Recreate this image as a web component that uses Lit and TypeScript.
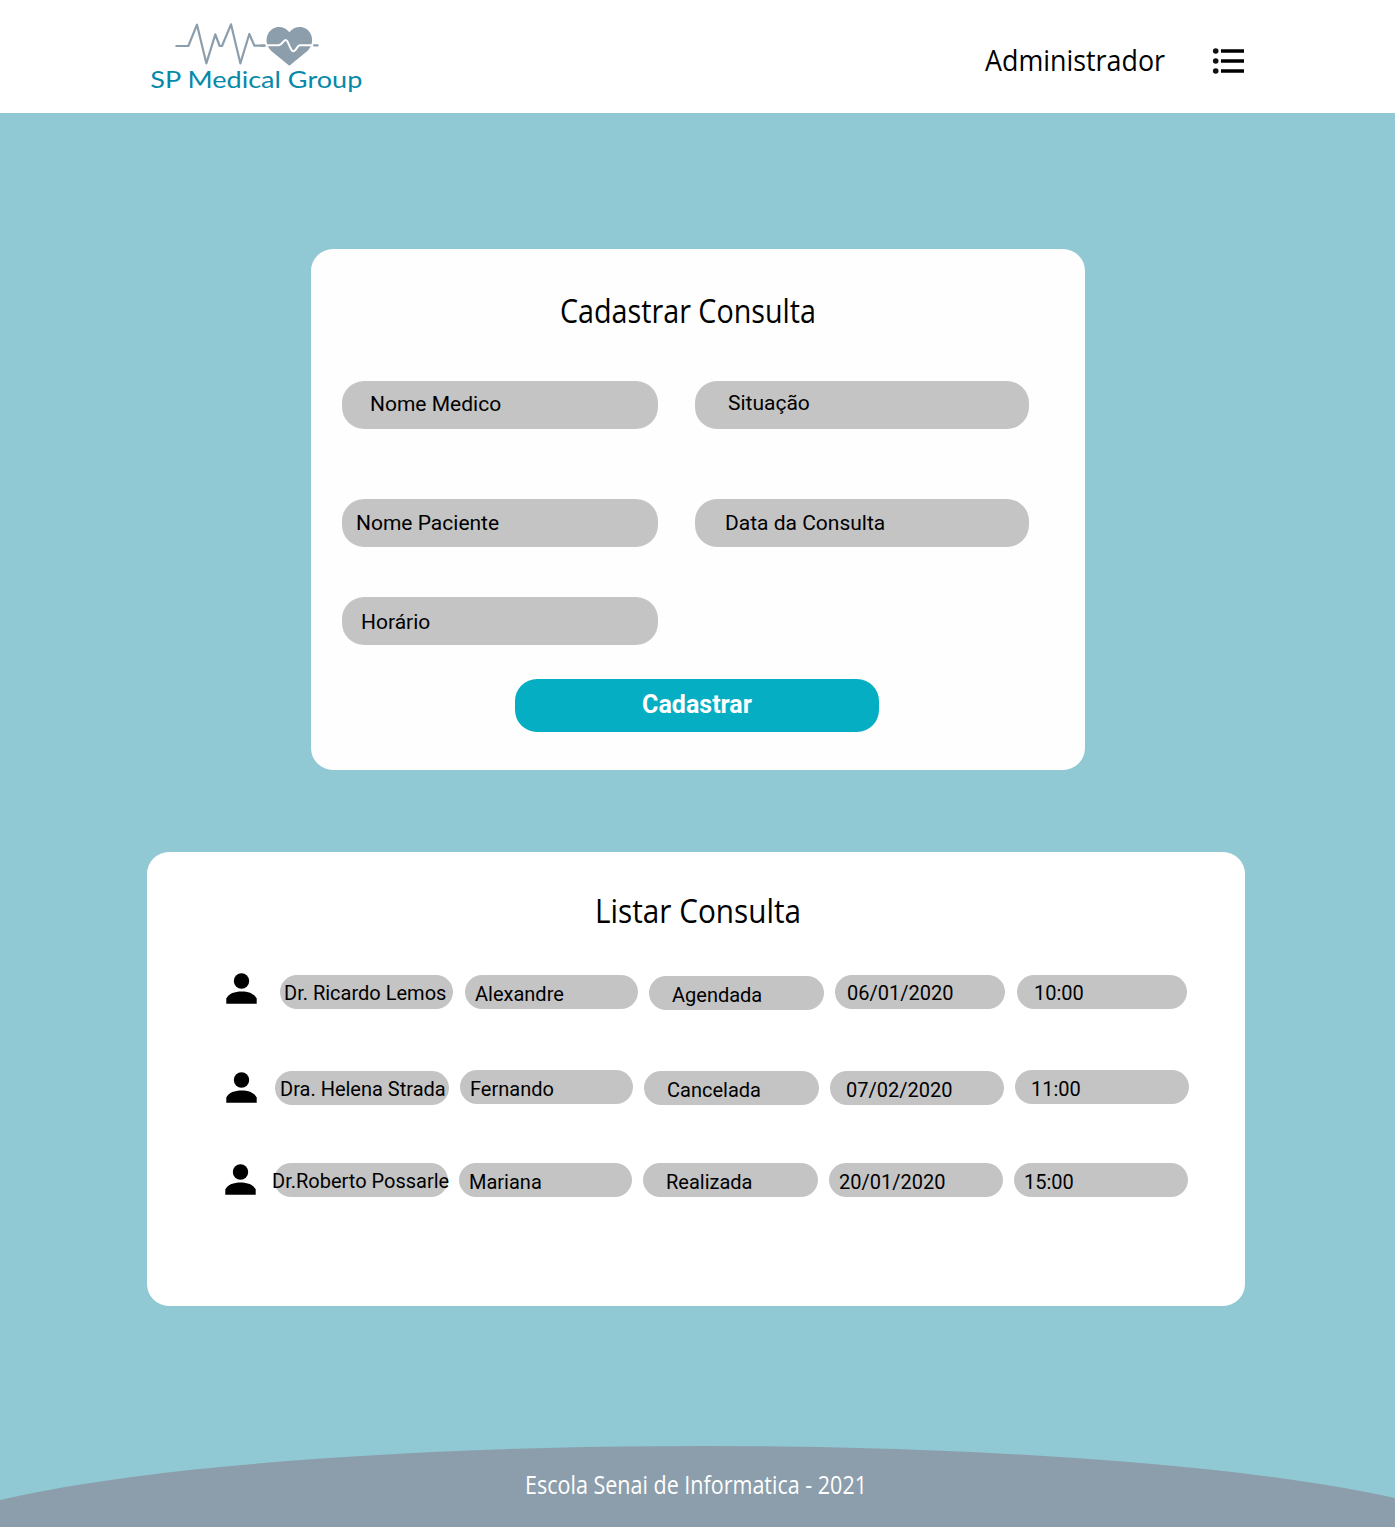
import { LitElement, html, css, svg } from "lit";
import { customElement, property } from "lit/decorators.js";

interface Appointment {
  doctor: string;
  patient: string;
  status: string;
  date: string;
  time: string;
}

const APPOINTMENTS: Appointment[] = [
  { doctor: "Dr. Ricardo Lemos", patient: "Alexandre", status: "Agendada", date: "06/01/2020", time: "10:00" },
  { doctor: "Dra. Helena Strada", patient: "Fernando", status: "Cancelada", date: "07/02/2020", time: "11:00" },
  { doctor: "Dr.Roberto Possarle", patient: "Mariana", status: "Realizada", date: "20/01/2020", time: "15:00" },
];

/** A single line of display text fitted to a fixed width. */
@customElement("fitted-text")
export class FittedText extends LitElement {
  @property() text = "";
  @property({ type: Number }) width = 100;
  @property({ type: Number }) size = 32;

  static styles = css`
    :host { display: block; }
    .line { display: block; overflow: visible; font-family: "Open Sans", "Noto Sans", sans-serif; fill: currentColor; }
  `;

  render() {
    const h = this.size;
    return html`<svg class="line" width=${this.width} height=${h}>
      ${svg`<text x="0" y=${h} font-size=${h} textLength=${this.width} lengthAdjust="spacingAndGlyphs">${this.text}</text>`}
    </svg>`;
  }
}

@customElement("app-logo")
export class AppLogo extends LitElement {
  static styles = css`
    :host { display: block; }
    .logo { display: block; width: 240px; height: 93px; }
    .pulse { fill: none; stroke: #8c9eac; stroke-width: 6.6; stroke-linejoin: round; stroke-linecap: round; }
    .heart { fill: #8c9eac; }
    .cut { fill: none; stroke: #fff; stroke-width: 6; stroke-linejoin: round; stroke-linecap: round; }
    .name { fill: #0689a8; font-family: Lato, sans-serif; font-size: 70px; }
  `;

  render() {
    return html`<svg class="logo" viewBox="0 0 720 279" aria-label="SP Medical Group">
      <path class="pulse" d="M109 108H145L171 44L199 160L226 73L239 108H246L273 43L301 160L328 72L343 107H374" />
      <path class="heart" d="M448 167L393 122C379 107 376 88 384 72C397 46 431 44 448 67C465 44 500 46 512 72C520 88 517 107 503 122Z" />
      <path class="cut" d="M378 106H417C426 105 430 90 437 90C447 91 449 124 461 124C470 123 470 107 479 106H519" />
      <path class="pulse" d="M364 107H374M522 106H533" />
      <text class="name" x="31" y="235" textLength="636" lengthAdjust="spacingAndGlyphs">SP Medical Group</text>
    </svg>`;
  }
}

@customElement("app-root")
export class AppRoot extends LitElement {
  static styles = css`
    :host { display: block; font-family: Roboto, sans-serif; color: #000; }
    * { box-sizing: border-box; }
    .page { display: flex; flex-direction: column; align-items: center; width: 1395px; height: 1527px; background: #90c8d3; overflow: hidden; }

    .header { display: flex; align-items: flex-start; width: 100%; height: 113px; flex: none; padding: 10px 0 0 140px; background: #fff; }
    .role { margin: 31px 0 0 605px; }
    .menu { display: block; width: 34px; height: 30px; margin: 36px 0 0 46px; }

    .form-card { display: flex; flex-direction: column; flex: none; width: 774px; height: 521px; margin: 136px 0 0 1px; padding: 42px 31px 0; border-radius: 22px; background: #fefefe; }
    .form-title { align-self: center; margin-right: 21px; }
    .fields { display: grid; grid-template-columns: 316px 334px; grid-template-rows: 118px 98px 48px; column-gap: 37px; margin-top: 58px; }
    .field { height: 48px; border-radius: 22px; background: #c4c4c4; font-size: 21px; line-height: 48px; white-space: nowrap; }
    .f1 { padding-left: 28px; line-height: 46px; }
    .f2 { padding-left: 33px; line-height: 44px; }
    .f3 { padding-left: 14px; }
    .f4 { padding-left: 30px; }
    .f5 { padding-left: 19px; line-height: 51px; }
    .submit { display: block; width: 364px; height: 53px; margin: 34px 0 0 173px; padding: 0 0 1px; border: 0; border-radius: 22px; background: #06aec3; color: #fff; font: 700 25px/52px Roboto, sans-serif; text-align: center; }

    .list-card { display: flex; flex-direction: column; flex: none; width: 1098px; height: 454px; margin: 82px 0 0 -3px; padding: 39px 0 0 78px; border-radius: 22px; background: #fff; }
    .list-title { margin-left: 370px; }
    .row { display: flex; align-items: flex-start; height: 34px; }
    .row-1 { margin-top: 52px; --gap: 12px; }
    .row-2 { margin-top: 61px; --gap: 11px; }
    .row-3 { margin-top: 59px; --gap: 11px; }
    .person { display: block; width: 33px; height: 33px; flex: none; }
    .pill { flex: none; height: 34px; margin-right: var(--gap); border-radius: 17px; background: #c4c4c4; font-size: 20px; line-height: 38px; white-space: nowrap; }
    .doctor { width: 174px; line-height: 36px; }
    .patient { width: 173px; padding-left: 10px; }
    .status { width: 175px; padding-left: 23px; }
    .date { width: 174px; }
    .time { width: 174px; }

    .row-1 .person { margin: -3px 22px 0 0; }
    .row-1 .doctor { width: 173px; padding-left: 4px; }
    .row-1 .patient { margin-right: 11.5px; width: 172.5px; }
    .row-1 .status { margin: 1px 11.5px 0 0; width: 174.5px; }
    .row-1 .date { width: 170px; padding-left: 12px; line-height: 36px; }
    .row-1 .time { width: 170px; padding-left: 17px; line-height: 36px; }

    .row-2 .person { margin: 1px 17px 0 0; }
    .row-2 .doctor { margin-top: 1px; padding-left: 5px; }
    .row-2 .status, .row-2 .date { margin-top: 1px; }
    .row-2 .date { padding-left: 16px; }
    .row-2 .time { padding-left: 16px; }

    .row-3 .person { margin: 0 17px 0 -1px; }
    .row-3 .doctor { text-indent: -2px; }
    .row-3 .date { padding-left: 10px; }
    .row-3 .time { padding-left: 10px; }

    .footer { position: relative; display: flex; justify-content: center; flex: none; width: 100%; height: 81px; margin-top: 140px; padding-top: 22px; color: #fff; }
    .hill { position: absolute; left: 0; top: 0; width: 1395px; height: 81px; }
    .credit { position: relative; margin-right: 3px; font-weight: 500; }
  `;

  render() {
    return html`
      <div class="page">
        <header class="header">
          <app-logo></app-logo>
          <fitted-text class="role" text="Administrador" width="180" size="30"></fitted-text>
          <svg class="menu" viewBox="0 0 34 30" aria-label="Menu">
            <g fill="#111">
              <circle cx="4.7" cy="5" r="2.8" /><circle cx="4.7" cy="15" r="2.8" /><circle cx="4.7" cy="25" r="2.8" />
            </g>
            <path d="M10 5H33M10 15H33M10 25H33" stroke="#000" stroke-width="3.4" />
          </svg>
        </header>

        <section class="form-card">
          <fitted-text class="form-title" text="Cadastrar Consulta" width="256" size="32"></fitted-text>
          <div class="fields">
            <div class="field f1">Nome Medico</div>
            <div class="field f2">Situação</div>
            <div class="field f3">Nome Paciente</div>
            <div class="field f4">Data da Consulta</div>
            <div class="field f5">Horário</div>
          </div>
          <button class="submit">Cadastrar</button>
        </section>

        <section class="list-card">
          <fitted-text class="list-title" text="Listar Consulta" width="206" size="32"></fitted-text>
          ${APPOINTMENTS.map(
            (a, i) => html`<div class="row row-${i + 1}">
              <svg class="person" viewBox="0 0 33 33">
                <circle cx="16.5" cy="9" r="7.7" />
                <path d="M1.3 31.8V26.5C4 21.6 9.6 19.6 16.5 19.6S29 21.6 31.7 26.5V31.8Z" />
              </svg>
              <div class="pill doctor">${a.doctor}</div>
              <div class="pill patient">${a.patient}</div>
              <div class="pill status">${a.status}</div>
              <div class="pill date">${a.date}</div>
              <div class="pill time">${a.time}</div>
            </div>`
          )}
        </section>

        <footer class="footer">
          <svg class="hill" viewBox="0 0 1395 81"><ellipse cx="702" cy="104" rx="800" ry="104" fill="#8c9eac" /></svg>
          <fitted-text class="credit" text="Escola Senai de Informatica - 2021" width="342" size="26"></fitted-text>
        </footer>
      </div>
    `;
  }
}
